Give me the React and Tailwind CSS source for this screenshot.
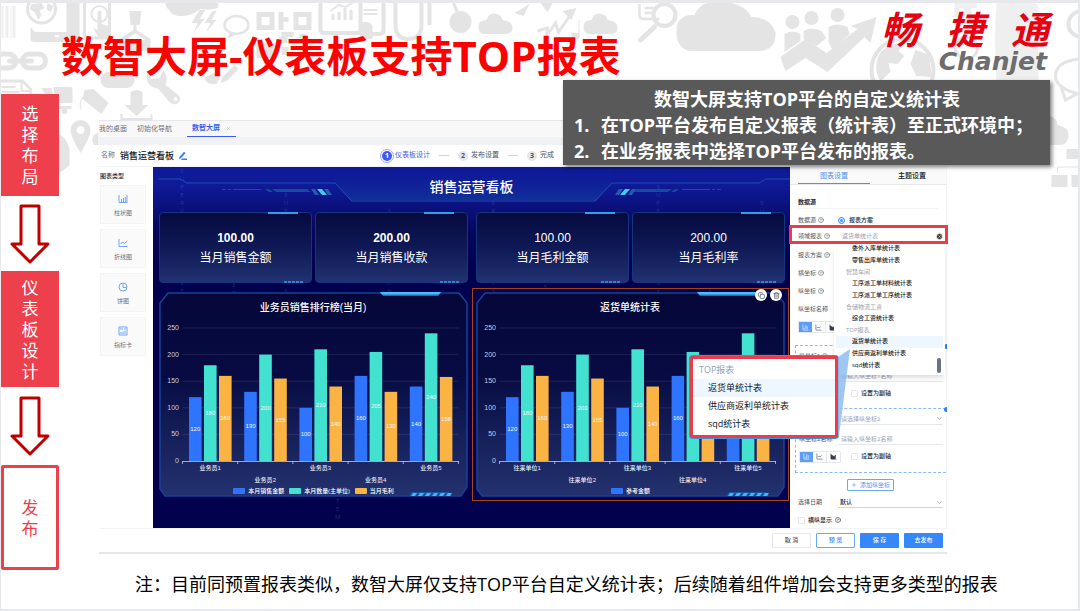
import React from "react";
import { BarChart3, LineChart, AreaChart, Copy, Trash2, X, ChevronDown, CircleHelp, CircleX, Plus } from "lucide-react";

const series = [
    { color: "#2f74ff", values: [120, 130, 100, 160, 140] },
    { color: "#43e1d0", values: [180, 200, 210, 205, 240] },
    { color: "#fbb343", values: [160, 155, 140, 130, 158] },
];

const metrics = [
    { value: "100.00", label: "当月销售金额", bold: true },
    { value: "200.00", label: "当月销售收款", bold: true },
    { value: "100.00", label: "当月毛利金额" },
    { value: "200.00", label: "当月毛利率" },
];

const reportOptions = [
    { text: "委外入库单统计表" },
    { text: "零售出库单统计表" },
    { text: "智慧车间", group: true },
    { text: "工序派工单材料统计表" },
    { text: "工序派工单工序统计表" },
    { text: "仓储物流工资", group: true },
    { text: "综合工资统计表" },
    { text: "TOP报表", group: true },
    { text: "返货单统计表", active: true },
    { text: "供应商返利单统计表" },
    { text: "sqd统计表" },
];

const Backdrop = () => (
    <svg className="absolute inset-x-0 top-0 h-[190px] w-full" viewBox="0 3 1080 190" preserveAspectRatio="xMidYMin slice" fill="#e4e4e4" stroke="#e4e4e4" strokeWidth="0" aria-hidden="true">
        <path d="M2 6h2v32h-2zM6 6h3v32h-3zM11 6h1v32h-1zM13 6h3v32h-3z" opacity=".6" />
        <circle cx="42" cy="9" r="14" fill="none" strokeWidth="3" />
        <path d="M32 4l10-1 3 5-5 3 2 4-3 5-4-8-5-3zM48 3l6 3-3 6-4-3z" />
        <path d="M31 27l4 5h32V3h13v35q0 4-4 4H35q-4 0-4-4zM55 35a2 2 0 1 0 5 0z" fillRule="evenodd" />
        <path d="M85 3v32q0 3 3 3h22V3" fill="none" strokeWidth="3" />
        <circle cx="100" cy="14" r="8" fill="none" strokeWidth="2" />
        <path d="M98 12q2-3 4 0v12l7 2q2 4-1 12h-9l-5-10 4 2z" />
        <path d="M130 11h12l-2 14h-3v5l14 9v12h-31V39l14-9v-5h-3zM136 33l-10 7h20z" fillRule="evenodd" />
        <path d="M166 3h52q4 5-4 6-8 1-13 0-10 8-22 7-8-1-9-6-4-2-4-7z" />
        <path d="M200 10l-8 13h6l-4 10 11-14h-5l6-9zM213 11l-8 12h6l-5 10 11-13h-5l5-9z" />
        <ellipse cx="237" cy="25" rx="12" ry="9" fill="none" strokeWidth="2.5" />
        <path d="M230 32l-2 7 9-5z" />
        <path d="M257 12h18v18h-18zM262 17v8h8v-8zM294 12h18v18h-18zM299 17v8h8v-8zM257 43h18v15h-18zM279 12h5v5h5v5h-5v8h-5zM282 32h12v5h-6v6h-8v-6h2zM300 34h6v5h6v4h-12zM282 47h7v8h-7z" fillRule="evenodd" />
        <path d="M321 3v26q0 4 4 4h36V3" fill="none" strokeWidth="4" />
        <path d="M332 14h3v6h-3zM338 12h3v8h-3zM344 8h3v12h-3zM350 10h3v10h-3z" />
        <path d="M331 11l8-6 7 2 8-5" fill="none" strokeWidth="2" />
        <g fill="none" strokeWidth="5">
            <path d="M0 54h8q8 0 8 7t-8 7H0" />
            <rect x="23" y="54" width="23" height="14" rx="7" />
            <path d="M10 61h22" strokeLinecap="round" />
            <path d="M1 81h22l8 8v12H1" strokeWidth="3" />
            <path d="M22 81v10h9" strokeWidth="2" />
        </g>
        <path d="M2 86h14v2H2zM2 91h18v2H2z" />
        <path d="M42 88h10l3 18h17v3H53zM54 87h17q2 0 2 3v13H56z" />
        <circle cx="65" cy="111" r="3" />
        <path d="M85 90l9-1 15 14-7 11-19-15z" />
        <path d="M83 97q-4 8-1 13" fill="none" strokeWidth="1" />
        <rect x="101" y="72" width="34" height="16" rx="8" />
        <path d="M131 92q6-4 12 0v13h6l-12 11-12-11h6z" />
        <path d="M122 114v5h30v-5" fill="none" strokeWidth="2" />
        <path d="M148 71l4 8 8-1 4-8q5 8 2 15l13 10q4 6-2 9-4 1-7-2l-11-13q-15-3-11-18z" />
        <circle cx="176" cy="99" r="2" fill="#fff" />
        <path d="M205 78q12-8 17-4l-5 10q-11 1-12-6zM221 83l2-6 12-12 4 4-12 12z" />
        <path d="M81 120a10 10 0 0 1 10 10q0 7-10 23-10-16-10-23a10 10 0 0 1 10-10zm0 6a4 4 0 1 0 .1 0z" fillRule="evenodd" />
        <path d="M58 135q8 0 12 14v16q-8 8-12 7zM99 133a7 7 0 0 0-4 12h4z" />
        <path d="M364 10h14M364 14h14" fill="none" strokeWidth="2" />
        <path d="M384 3v27q0 4-4 4h-8M396 3v22q0 14 13 14t13-14V3M430 3v22" fill="none" strokeWidth="4" />
        <path d="M360 22q11-1 13 4v13h-13z" />
        <circle cx="461" cy="22" r="11" />
        <path d="M461 20l-7-17" strokeWidth="3" />
        <path d="M485 34q-6 0-6-7t8-7q3-8 10-6 5 1 6 6 10 1 10 8 0 6-7 6zM590 34q-6 0-6-7t8-7q3-8 10-6 5 1 6 6 10 1 10 8 0 6-7 6zM515 13l15-9-6 12zM541 3h12l-5 9z" />
        <path d="M538 31l10-3-1 8 9-13 3 9 14-20" fill="none" strokeWidth="3" />
        <path d="M563 11l14-3-5 12zM579 20h1v19h-8V33h7z" />
        <path d="M640 4v12q0 3 4 3h16M645 8h9M645 13h9" fill="none" strokeWidth="2.5" />
        <circle cx="665" cy="15" r="11" fill="none" strokeWidth="4" />
        <path d="M655 27l-14 13" strokeWidth="5" strokeLinecap="round" />
        <path d="M690 51q-13-3-13-19 0-18 18-17 6-14 22-13 27-1 35 15 18 0 24 15 1 18-16 19z" />
        <circle cx="793" cy="22" r="7" />
        <circle cx="812" cy="18" r="7" />
        <circle cx="838" cy="15" r="7" />
        <path d="M785 34q8-5 16 0v7l-16 11zM804 31q8-5 18 0l5 7-10 8-13-7zM829 27q9-5 19 0l2 7-17 16-4-8z" />
        <path d="M781 57l25-18 21 14 31-24-7-3 26-9-6 26-6-6-37 35-22-14-20 13z" />
        <circle cx="903" cy="70" r="31" fill="none" strokeWidth="4" />
        <path d="M882 51q12-9 22-8l-5 8 6 5-7 8-9-1 2 9-10 9q-9-15 1-30zM916 50l14 5 2 22-15-1-6-12z" />
        <path d="M997 3q-3 35 0 80h42V10q0-7-6-7zM955 3h22v5h-17v9h-5zM964 8h8v16h-8z" opacity=".6" />
        <circle cx="967" cy="48" r="11" fill="none" strokeWidth="3" />
        <circle cx="1082" cy="24" r="13" fill="none" strokeWidth="4" />
        <path d="M1079 94q-23-6-23-18 0-14 23-17M1062 88l4 12 13-7" fill="none" strokeWidth="3" />
        <path d="M1038 116h12q8 2 8 9 11 2 11 10 0 10-10 10h-21zM1067 149h13v10h-13zM1052 175h16v12h-16zM1072 175h8v12h-8z" />
        <path d="M1058 173v-6h21v-7" fill="none" strokeWidth="1" />
    </svg>
);

const FlowArrow = () => (
    <svg className="h-[60px] w-[40px]" viewBox="0 0 40 60" fill="#fff" stroke="#c00000" strokeWidth="3" strokeLinejoin="round" aria-hidden="true">
        <path d="M11 2h18v38h9L20 58 2 40h9z" />
    </svg>
);

const StepsRail = () => (
    <aside className="flex w-[58px] shrink-0 flex-col items-center text-center text-[17px] leading-[21px]">
        <div className="flex h-[102px] w-full items-center justify-center bg-[#ed3f4c] text-white"><p className="w-[17px]">选择布局</p></div>
        <div className="flex h-[75px] items-center"><FlowArrow /></div>
        <div className="flex h-[116px] w-full items-center justify-center bg-[#ed3f4c] text-white"><p className="w-[17px]">仪表板设计</p></div>
        <div className="flex h-[78px] items-center"><FlowArrow /></div>
        <div className="flex h-[105px] w-full items-center justify-center rounded-xs border-3 border-[#ed3f4c] text-[#ed3f4c]"><p className="w-[17px]">发布</p></div>
    </aside>
);

const SupervisionText = () => {
    const pads = ["pt-0", "pt-[90px]", "pt-6", "pt-[210px]", "pt-10", "pt-[150px]", "pt-2", "pt-[60px]", "pt-[230px]", "pt-4", "pt-[120px]", "pt-8"];
    return (
        <div className="pointer-events-none absolute inset-0 flex justify-between overflow-hidden px-6 text-[6px] text-[#5a86d8] opacity-30" aria-hidden="true">
            {pads.map((pad, i) => (
                <span key={i} className={`${pad} [text-orientation:upright] [writing-mode:vertical-rl]`}>SUPERVISION SYSTEM</span>
            ))}
        </div>
    );
};

const BoardHeader = () => (
    <div className="relative flex h-[45px] justify-center pt-[10px]">
        <svg className="absolute inset-x-0 top-0 h-[45px] w-full" viewBox="0 0 637 45" preserveAspectRatio="none" fill="none" aria-hidden="true">
            <defs>
                <linearGradient id="headGlow">
                    <stop offset="0" stopColor="#1a55b8" />
                    <stop offset=".5" stopColor="#4fb0ff" />
                    <stop offset="1" stopColor="#1a55b8" />
                </linearGradient>
                <linearGradient id="headFill" x1="0" y1="0" x2="0" y2="1">
                    <stop offset="0" stopColor="#101a98" stopOpacity="0" />
                    <stop offset="1" stopColor="#1442a4" stopOpacity=".7" />
                </linearGradient>
            </defs>
            <path d="M182 16l17 19h243l17-19V0H182z" fill="url(#headFill)" />
            <path d="M5 12h22l7 4h148l17 18M637 12h-24l-7 4H459l-17 18" stroke="#1a50ae" />
            <path d="M199 34.500h243" stroke="url(#headGlow)" strokeWidth="1.500" />
            <path d="M69 22.500h4M75 22.500h3M80 22.500h28M568 22.500h-4M562 22.500h-3M557 22.500h-28" stroke="#194a9f" />
            <path d="M112 22h4l4 3h-4zM119 22h35l4 3h-35zM526 22h-4l-4 3h4zM519 22h-35l-4 3h35z" fill="#17499f" />
            <path d="M158 22h4l4 6h-4zM171 22h4l4 6h-4zM483 22h-4l-4 6h4zM470 22h-4l-4 6h4z" fill="#235cae" />
            <path d="M164 22h5l5 6h-5zM477 22h-5l-5 6h5z" fill="#46c8f5" />
        </svg>
        <h2 className="relative text-[14px] leading-[20px] font-medium text-white">销售运营看板</h2>
    </div>
);

const MetricCard = ({ value, label, bold }) => (
    <div className="relative flex h-[71px] flex-1 flex-col items-center rounded-[4px] border border-[#16357d] bg-linear-to-b from-[#060a3f] via-[#0f1955] to-[#223272] pt-[17px] text-white">
        <span className="absolute -top-px right-[13px] h-[2px] w-[30px] bg-[#309fe6]" />
        <span className="absolute right-[8px] -bottom-px flex gap-[1px]">
            {[0, 1, 2, 3, 4].map((i) => <i key={i} className="h-[2px] w-[3px] -skew-x-12 bg-[#2c88cf]" />)}
        </span>
        <p className={`font-['Liberation_Sans','Noto_Sans_CJK_SC',sans-serif] text-[12px] leading-[16px] ${bold ? "font-bold" : ""}`}>{value}</p>
        <p className="mt-[3px] text-[12px] leading-[18px]">{label}</p>
    </div>
);

// labelled: how many bars of each series carry their value
const ChartPanel = ({ id, title, prefix, legend, labelled = [5, 5, 5] }) => {
    const x0 = 23.500;
    const y0 = 169;
    const step = 55.200;
    const unit = 0.532;
    return (
        <div className="relative min-w-0">
            <svg className="block w-full font-['Liberation_Sans','Noto_Sans_CJK_SC',sans-serif]" viewBox="0 0 309 205" role="img" aria-label={title}>
                <defs>
                    <linearGradient id={id} x1="0" y1="0" x2="0" y2="1">
                        <stop offset="0" stopColor="#050739" />
                        <stop offset=".4" stopColor="#070b42" />
                        <stop offset="1" stopColor="#23326f" />
                    </linearGradient>
                </defs>
                <path d="M9 1h291l8 10v184l-6 9H6l-5-7V11z" fill={`url(#${id})`} stroke="#174392" strokeWidth="1.500" />
                <path d="M221 0h61l-3 4h-55z" fill="#1b6cc0" />
                <path d="M221 0h61l-2 2.500h-57z" fill="#48bdf7" />
                <path d="M250 204l3-4h37l3 4z" fill="#1a56a8" />
                {[0, 1, 2, 3, 4, 5].map((i) => (
                    <path key={i} d={`M${252 + i * 7} 204l2-3h4l-2 3z`} fill="#42b9f2" />
                ))}
                <text x="154" y="19" fill="#fff" fontSize="10" fontWeight="500" textAnchor="middle">{title}</text>
                {[50, 100, 150, 200, 250].map((v) => (
                    <path key={v} d={`M${x0} ${y0 - v * unit}H300`} stroke="#fff" strokeOpacity=".12" strokeWidth=".8" />
                ))}
                {[0, 50, 100, 150, 200, 250].map((v) => (
                    <text key={v} x="20" y={y0 + 2 - v * unit} fill="#c9cde0" fontSize="7" textAnchor="end">{v}</text>
                ))}
                <path d={`M${x0} ${y0 + 0.500}H300`} stroke="#c3c8e0" strokeWidth=".8" />
                {[0, 1, 2, 3, 4, 5].map((i) => (
                    <path key={i} d={`M${x0 + i * step} ${y0}v3`} stroke="#c3c8e0" strokeWidth=".8" />
                ))}
                {series.map((s, si) => s.values.map((v, i) => (
                    <g key={`${si}-${i}`}>
                        <rect x={x0 + i * step + 6.500 + si * 15} y={y0 - v * unit} width="12.600" height={v * unit} fill={s.color} />
                        {i < labelled[si] && (
                            <text x={x0 + i * step + 12.800 + si * 15} y={y0 + 2 - (v * unit) / 2} fill="#f4f6fd" fontSize="6" textAnchor="middle">{v}</text>
                        )}
                    </g>
                )))}
                {[1, 2, 3, 4, 5].map((n, i) => (
                    <text key={n} x={x0 + (i + 0.500) * step} y={n % 2 ? 178 : 190} fill="#eceef8" fontSize="6" fontWeight="500" textAnchor="middle">{prefix}{n}</text>
                ))}
            </svg>
            <ul className="absolute inset-x-0 bottom-[2px] flex justify-center gap-[5px] text-[6px] leading-[8px] font-medium text-white">
                {legend.map((name, i) => (
                    <li key={name} className="flex items-center gap-[3px]">
                        <span className="h-[6px] w-[12px] rounded-[1px]" style={{ background: series[i].color }} />{name}
                    </li>
                ))}
            </ul>
        </div>
    );
};

const Dashboard = () => (
    <section className="relative min-w-0 flex-1 bg-linear-to-b from-[#0f1a98] from-5% via-[#06065e] via-18% to-[#02014d] to-30%">
        <SupervisionText />
        <BoardHeader />
        <div className="relative grid grid-cols-2 gap-x-2 pr-[5px] pl-[6px]">
            <div className="flex gap-[3px]">
                {metrics.slice(0, 2).map((m) => <MetricCard key={m.label} {...m} />)}
            </div>
            <div className="flex gap-[3px]">
                {metrics.slice(2).map((m) => <MetricCard key={m.label} {...m} />)}
            </div>
            <div className="mt-[9px]">
                <ChartPanel id="salesFill" title="业务员销售排行榜(当月)" prefix="业务员" legend={["本月销售金额", "本月数量(主单位)", "当月毛利"]} />
            </div>
            <div className="relative mt-[9px] outline outline-offset-[3px] outline-[#a9451d]">
                <ChartPanel id="returnFill" title="返货单统计表" prefix="往来单位" legend={["参考金额"]} labelled={[4, 3, 3]} />
                <div className="absolute -top-[3px] right-[3px] flex gap-[3px] text-gray-700">
                    <button aria-label="复制" className="flex size-[12px] items-center justify-center rounded-full bg-white"><Copy size={7} /></button>
                    <button aria-label="删除" className="flex size-[12px] items-center justify-center rounded-full bg-white"><Trash2 size={7} /></button>
                </div>
            </div>
        </div>
    </section>
);

const PaletteIcon = ({ children }) => (
    <svg className="size-[10px]" viewBox="0 0 10 10" fill="none" stroke="#6ba5f8" aria-hidden="true">{children}</svg>
);

const ChartPalette = () => {
    const kinds = [
        { label: "柱状图", icon: <path d="M1 1v7.500h8.500M3.500 8V5M5.500 8V4M7.300 8V3M9 8V1" /> },
        { label: "折线图", icon: <path d="M1 1v7.500h8.500M2.500 6l2-2 2 1.500L9.500 3" /> },
        { label: "饼图", icon: <><circle cx="5" cy="5" r="4" /><path d="M5 1.500V5.500h3.500" /></> },
        { label: "指标卡", icon: <path d="M1 1h8v8H1zM2 3h3M6 3h2M3 8V6M5 8V5.500M7 8V5" /> },
    ];
    return (
        <nav className="w-[54px] shrink-0 pl-px text-[6px] text-gray-500">
            <h3 className="leading-[18px] font-medium text-gray-800">图表类型</h3>
            <div className="flex w-[46px] flex-col gap-[5px]">
                {kinds.map((k) => (
                    <button key={k.label} className="flex h-[39px] flex-col items-center justify-center gap-[5px] border border-gray-100 bg-[#fafafa] pt-[2px] leading-[8px]">
                        <PaletteIcon>{k.icon}</PaletteIcon>{k.label}
                    </button>
                ))}
            </div>
        </nav>
    );
};

const ChartTypeButtons = () => (
    <div className="flex h-[12px] w-[42px] shrink-0 overflow-hidden rounded-[1px] border border-gray-200 text-gray-700">
        <button aria-label="柱状图" className="flex flex-1 items-center justify-center bg-[#5b9dfb] text-white"><BarChart3 size={7} /></button>
        <button aria-label="折线图" className="flex flex-1 items-center justify-center border-r border-gray-200"><LineChart size={7} /></button>
        <button aria-label="面积图" className="flex flex-1 items-center justify-center"><AreaChart size={7} fill="currentColor" /></button>
    </div>
);

const Help = () => <CircleHelp size={6} className="shrink-0" />;

const FieldLabel = ({ htmlFor, help, children }) => (
    <label htmlFor={htmlFor} className="flex w-[40px] shrink-0 items-center gap-[2px] whitespace-nowrap text-gray-600">
        {children}{help && <Help />}
    </label>
);

const TextField = ({ id, placeholder, arrow }) => (
    <div className="flex min-w-0 flex-1 items-center border-b border-gray-200 text-gray-500">
        <input id={id} placeholder={placeholder} className="w-full min-w-0 px-[2px] leading-[10px] placeholder:text-gray-400 focus:outline-none" />
        {arrow && <ChevronDown size={7} className="shrink-0" />}
    </div>
);

const CheckBox = ({ label }) => (
    <label className="flex items-center gap-[3px] font-medium text-gray-800">
        <input type="checkbox" className="size-[7px] appearance-none rounded-[1px] border border-gray-200 bg-white" />{label}
    </label>
);

const AxisGroup = ({ n, className = "" }) => (
    <fieldset className={`relative -mx-[3px] border-b border-dashed border-[#8ab8fa] pr-[3px] pl-[3px] ${className}`}>
        <span className="absolute -top-[2px] -right-px h-[5px] w-[3px] rounded-l-full bg-[#2f80f7]" />
        <div className="flex h-[20px] items-center"><FieldLabel htmlFor={`axis${n}`} help>纵坐标{n}</FieldLabel><TextField id={`axis${n}`} placeholder={`请选择纵坐标${n}`} arrow /></div>
        <div className="flex h-[20px] items-center"><FieldLabel htmlFor={`axisName${n}`}>纵坐标{n}名称</FieldLabel><TextField id={`axisName${n}`} placeholder={`请输入纵坐标${n}名称`} /></div>
        <div className="flex h-[15px] items-center gap-[10px]">
            <ChartTypeButtons />
            <CheckBox label="设置为副轴" />
        </div>
    </fieldset>
);

const ReportMenu = () => (
    <div role="listbox" className="absolute top-full right-0 left-[42px] z-10 mt-[3px] h-[131px] overflow-hidden bg-white shadow-md">
        <div className="-mt-px flex h-[128px] flex-col px-[2px]">
            {reportOptions.map((o) => (
                <div
                    key={o.text}
                    role={o.group ? "presentation" : "option"}
                    className={`flex flex-1 items-center whitespace-nowrap ${o.group ? "pl-[10px] text-gray-400" : "pl-[16px] font-medium text-gray-900"} ${o.active ? "bg-[#eef6ff]" : ""}`}
                >
                    {o.text}
                </div>
            ))}
        </div>
        <span className="absolute right-[4px] bottom-[2px] h-[15px] w-[4px] rounded-full bg-gray-500" />
    </div>
);

const SettingsPanel = () => (
    <aside className="flex w-[157px] shrink-0 flex-col border-r border-gray-100 bg-white text-[6px] leading-[9px] text-gray-800">
        <div className="flex h-[18px] border-b border-gray-200 bg-[#fafafa] px-[8px] text-[7px]">
            <button className="w-[72px] border-b border-[#4a90f7] text-[#4a90f7]">图表设置</button>
            <button className="ml-[16px] flex-1 font-medium text-gray-900">主题设置</button>
        </div>
        <h3 className="mx-[8px] h-[24px] border-b border-gray-100 pt-[13px] font-bold">数据源</h3>
        <div className="flex h-[16px] items-center pt-[6px] pl-[8px]">
            <FieldLabel htmlFor="source" help>数据源</FieldLabel>
            <label className="flex items-center gap-[4px] font-medium">
                <input id="source" type="radio" defaultChecked className="size-[7px] appearance-none rounded-full border border-[#4a90f7] bg-[#4a90f7] shadow-[inset_0_0_0_1px_white]" />报表方案
            </label>
        </div>
        <div className="relative z-10 -mr-[2px] -ml-px flex h-[19px] items-center border-3 border-[#ec3b4b] bg-white pt-[3px] pr-[2px] pl-[6px]">
            <FieldLabel htmlFor="report" help>领域报表</FieldLabel>
            <input id="report" placeholder="返货单统计表" className="w-full min-w-0 px-[4px] placeholder:text-gray-400 focus:outline-none" />
            <CircleX size={7} className="shrink-0" fill="#333" stroke="#fff" />
            <ReportMenu />
        </div>
        <div className="mt-[2px] flex flex-1 flex-col pr-[3px] pl-[8px]">
            <div className="flex h-[18px] items-center"><FieldLabel htmlFor="plan" help>报表方案</FieldLabel><TextField id="plan" arrow /></div>
            <div className="flex h-[18px] items-center"><FieldLabel htmlFor="xAxis" help>横坐标</FieldLabel><TextField id="xAxis" arrow /></div>
            <div className="flex h-[18px] items-center"><FieldLabel htmlFor="yAxis" help>纵坐标</FieldLabel><TextField id="yAxis" arrow /></div>
            <div className="flex h-[18px] items-center"><FieldLabel htmlFor="yName">纵坐标名称</FieldLabel><TextField id="yName" /></div>
            <div className="mt-[3px]"><ChartTypeButtons /></div>
            <AxisGroup n={1} className="mt-[12px] border-t border-l pb-[7px]" />
            <AxisGroup n={2} className="border-l pb-[8px]" />
            <button className="mt-[6px] ml-[49px] flex h-[12px] w-[47px] items-center justify-center gap-[3px] rounded-[1px] border border-[#6aa6fb] text-[#4a90f7]"><Plus size={6} />添加纵坐标</button>
            <div className="mt-[2px] flex h-[19px] items-center">
                <FieldLabel htmlFor="date">选择日期</FieldLabel>
                <div className="flex flex-1 items-center border-b border-gray-300">
                    <select id="date" className="flex-1 appearance-none px-[2px] leading-[10px] font-medium"><option>默认</option></select>
                    <ChevronDown size={7} className="text-gray-500" />
                </div>
            </div>
            <div className="flex h-[16px] items-center gap-[3px]"><CheckBox label="横纵显示" /><Help /></div>
        </div>
    </aside>
);

const ReportZoom = () => (
    <div className="absolute top-[182px] right-[97px] z-20 flex items-start">
        <div className="mt-[7px] w-[148px] rounded-[3px] border-3 border-[#ec3b4b] bg-white pt-[2px] pb-[2px] text-[9px] leading-[18px] text-gray-900 ring-1 ring-[#3d8fe0]">
            <p className="pl-[6px] text-gray-400">TOP报表</p>
            <p className="bg-[#eef6ff] pl-[15px]">返货单统计表</p>
            <p className="pl-[15px]">供应商返利单统计表</p>
            <p className="pl-[15px]">sqd统计表</p>
        </div>
        <svg className="h-[88px] w-[12px]" viewBox="0 0 12 88" aria-hidden="true">
            <path d="M0 8L12 0 1 87H0z" fill="#8fbdf0" opacity=".85" />
        </svg>
    </div>
);

const WizardStep = ({ n, active, children }) => (
    <span className={`flex items-center gap-[3px] ${active ? "text-[#3f5bf6]" : "text-gray-600"}`}>
        <b className={`flex size-[10px] items-center justify-center rounded-full text-[7px] leading-none ${active ? "bg-[#3f5bf6] text-white outline outline-offset-1 outline-[#9daafb]" : "bg-gray-200 text-gray-600"}`}>{n}</b>
        {children}
    </span>
);

const Designer = () => (
    <main className="mt-[26px] mr-[131px] ml-[40px] flex min-w-0 flex-1 flex-col self-start border-t border-b-2 border-gray-200 bg-white">
        <div className="flex h-[16px] bg-[#f8f8f8] text-[7px] text-gray-500">
            <button className="pr-[6px]">我的桌面</button>
            <button className="pr-[15px] pl-[4px]">初始化导航</button>
            <button className="flex items-center gap-[6px] border-b border-[#3f5bf6] px-[5px] font-bold text-[#3f5bf6]">数智大屏<X size={5} className="text-gray-400" /></button>
        </div>
        <div className="h-[8px] bg-[#f1f2f5]" />
        <div className="flex h-[22px] items-center border-b border-gray-100 pl-[2px] text-[7px] text-gray-500">
            名称
            <strong className="ml-[5px] text-[9px] font-medium text-gray-900">销售运营看板</strong>
            <button aria-label="修改名称" className="ml-[4px]">
                <svg className="size-[9px]" viewBox="0 0 9 9" fill="#2f80f7" aria-hidden="true"><path d="M1 8l.5-2L6 .8l1.500 1.200L3 7.300zM4 7.500h5V9H3z" /></svg>
            </button>
            <div className="ml-[195px] flex items-center gap-[9px] whitespace-nowrap">
                <WizardStep n="1" active>仪表板设计</WizardStep>
                <i className="h-px w-[10px] bg-gray-300" />
                <WizardStep n="2">发布设置</WizardStep>
                <i className="h-px w-[10px] bg-gray-300" />
                <WizardStep n="3">完成</WizardStep>
            </div>
        </div>
        <div className="relative flex">
            <ChartPalette />
            <Dashboard />
            <SettingsPanel />
            <ReportZoom />
        </div>
        <div className="flex h-[24px] items-center justify-end gap-[5px] border-t border-gray-100 pr-[4px] text-[6px] font-medium">
            <button className="h-[15px] w-[39px] rounded-[1px] border border-gray-200 text-gray-600">取 消</button>
            <button className="h-[15px] w-[39px] rounded-[1px] border border-[#6aa6fb] text-[#3588fb]">预 览</button>
            <button className="h-[15px] w-[39px] rounded-[1px] bg-[#3588fb] text-white">保 存</button>
            <button className="h-[15px] w-[39px] rounded-[1px] bg-[#3588fb] text-white">去发布</button>
        </div>
    </main>
);

const Logo = () => (
    <div className="flex flex-col items-end italic">
        <div className="flex gap-[27px] text-[38px] leading-[40px] font-bold text-[#e60012]"><span>畅</span><span>捷</span><span>通</span></div>
        <div className="pr-[2px] font-['DejaVu_Sans',sans-serif] text-[25px] leading-[26px] font-bold text-[#6d6d6f]">Chanjet</div>
    </div>
);

const notes = [
    "在TOP平台发布自定义报表（统计表）至正式环境中；",
    "在业务报表中选择TOP平台发布的报表。",
];

const App = () => (
    <div className="relative min-h-screen overflow-hidden border-t-3 border-r-2 border-b-2 border-l border-[#e7e8eb] bg-white font-['Open_Sans','Noto_Sans_CJK_SC',sans-serif]">
        <Backdrop />
        <div className="relative">
            <header className="flex h-[91px] items-start justify-between pr-[29px] pl-[60px]">
                <h1 className="mt-[25px] text-[42px] leading-[56px] font-bold whitespace-nowrap text-[#ff0000]">数智大屏-仪表板支持TOP报表</h1>
                <div className="mt-[6px]"><Logo /></div>
            </header>
            <div className="flex items-start">
                <StepsRail />
                <Designer />
            </div>
            <p className="pl-[134px] text-[18px] leading-[28px] whitespace-nowrap text-black">注：目前同预置报表类似，数智大屏仅支持TOP平台自定义统计表；后续随着组件增加会支持更多类型的报表</p>
            <section className="absolute top-[77px] right-[28px] z-30 w-[487px] bg-[#595959] pt-[6px] pr-[10px] pb-px pl-[11px] text-[18px] leading-[26px] font-bold whitespace-nowrap text-white shadow-[2px_2px_4px_rgba(0,0,0,0.5)]">
                <h2 className="text-center">数智大屏支持TOP平台的自定义统计表</h2>
                <ol>
                    {notes.map((note, i) => (
                        <li key={note} className="flex"><span className="w-[27px]">{i + 1}.</span>{note}</li>
                    ))}
                </ol>
            </section>
        </div>
    </div>
);

export default App;
